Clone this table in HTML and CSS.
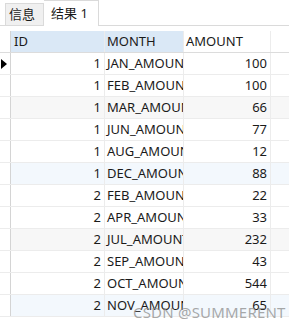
FILE: index.html
```html
<!DOCTYPE html>
<html lang="zh">
<head>
  <meta charset="UTF-8">
  <title>结果 1</title>
  <link rel="stylesheet" href="styles.css">
</head>
<body>
  <div class="tabs">
    <div class="tab">信息</div>
    <div class="tab active">结果 1</div>
  </div>
  <div class="grid">
    <div class="row head">
      <div class="ind"></div>
      <div class="cell id hl">ID</div>
      <div class="cell month hl">MONTH</div>
      <div class="cell amount">AMOUNT</div>
    </div>
    <div class="row"><div class="ind"><span class="arrow"></span></div><div class="cell id num">1</div><div class="cell month">JAN_AMOUNT</div><div class="cell amount num">100</div></div>
    <div class="row"><div class="ind"></div><div class="cell id num">1</div><div class="cell month">FEB_AMOUNT</div><div class="cell amount num">100</div></div>
    <div class="row gray"><div class="ind"></div><div class="cell id num">1</div><div class="cell month">MAR_AMOUNT</div><div class="cell amount num">66</div></div>
    <div class="row"><div class="ind"></div><div class="cell id num">1</div><div class="cell month">JUN_AMOUNT</div><div class="cell amount num">77</div></div>
    <div class="row"><div class="ind"></div><div class="cell id num">1</div><div class="cell month">AUG_AMOUNT</div><div class="cell amount num">12</div></div>
    <div class="row blue"><div class="ind"></div><div class="cell id num">1</div><div class="cell month">DEC_AMOUNT</div><div class="cell amount num">88</div></div>
    <div class="row"><div class="ind"></div><div class="cell id num">2</div><div class="cell month">FEB_AMOUNT</div><div class="cell amount num">22</div></div>
    <div class="row"><div class="ind"></div><div class="cell id num">2</div><div class="cell month">APR_AMOUNT</div><div class="cell amount num">33</div></div>
    <div class="row gray"><div class="ind"></div><div class="cell id num">2</div><div class="cell month">JUL_AMOUNT</div><div class="cell amount num">232</div></div>
    <div class="row"><div class="ind"></div><div class="cell id num">2</div><div class="cell month">SEP_AMOUNT</div><div class="cell amount num">43</div></div>
    <div class="row"><div class="ind"></div><div class="cell id num">2</div><div class="cell month">OCT_AMOUNT</div><div class="cell amount num">544</div></div>
    <div class="row blue"><div class="ind"></div><div class="cell id num">2</div><div class="cell month">NOV_AMOUNT</div><div class="cell amount num">65</div></div>
  </div>
  <div class="watermark">CSDN @SUMMERENT</div>
</body>
</html>
```

FILE: styles.css
```css
body {
  margin: 0;
  font-family: 'Noto Sans', 'Noto Sans CJK SC', sans-serif;
  font-size: 13px;
  color: #1a1a1a;
  background-color: #ffffff;
  width: 289px;
  height: 329px;
  overflow: hidden;
  position: relative;
}
.tabs {
  height: 25px;
  display: flex;
  align-items: flex-end;
  padding-left: 5px;
  border-bottom: 1px solid #dadada;
}
.tab {
  height: 21px;
  line-height: 21px;
  padding: 0 8px 0 3px;
  background-color: #f0f0f0;
  border: 1px solid #dadada;
  border-bottom: none;
  font-size: 13px;
}
.tab.active {
  height: 24px;
  line-height: 24px;
  padding: 0 10px 0 7px;
  background-color: #ffffff;
  border-left: none;
  margin-bottom: -1px;
  padding-bottom: 1px;
}
.grid {
  margin-top: 5px;
}
.row {
  display: flex;
  height: 21px;
  border-bottom: 1px solid #ececec;
}
.row.head {
  border-bottom-color: #dcdcdc;
}
.row.gray {
  background-color: #f7f7f7;
}
.row.blue {
  background-color: #f3f8fd;
}
.ind {
  width: 10px;
  flex: none;
  border-right: 1px solid #d4d4d4;
  background-color: #ffffff;
  display: flex;
  align-items: center;
  justify-content: center;
}
.arrow {
  width: 0;
  height: 0;
  border-top: 5px solid transparent;
  border-bottom: 5px solid transparent;
  border-left: 6px solid #000000;
  margin-left: -2px;
}
.cell {
  line-height: 21px;
  white-space: nowrap;
  overflow: hidden;
  border-right: 1px solid #ececec;
  flex: none;
  box-sizing: border-box;
  padding: 0 2px;
}
.cell.hl {
  background-color: #dae8f6;
}
.cell.id {
  width: 94px;
}
.cell.month {
  width: 79px;
}
.cell.amount {
  width: 87px;
}
.cell.num {
  text-align: right;
  padding-right: 3px;
}
.head .cell.id {
  padding-left: 3px;
}
.watermark {
  position: absolute;
  left: 133px;
  top: 302px;
  font-size: 15px;
  color: rgba(140, 140, 140, 0.75);
  letter-spacing: 0.2px;
}
```
